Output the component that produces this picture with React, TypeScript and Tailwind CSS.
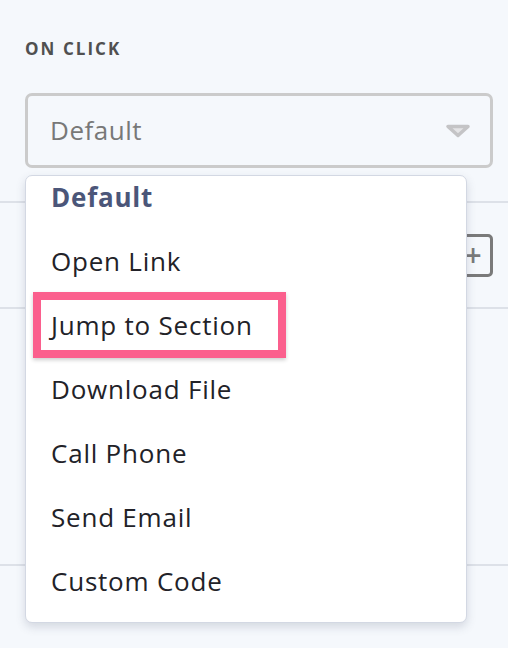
import React from "react";

const OPTIONS = [
  "Default",
  "Open Link",
  "Jump to Section",
  "Download File",
  "Call Phone",
  "Send Email",
  "Custom Code",
];

const FONT = { fontFamily: '"Open Sans", "Noto Sans", Arial, sans-serif' };

const Caret = () => (
  <svg width="26" height="14" viewBox="0 0 26 14" className="shrink-0">
    <path
      d="M3 2.5 H23 L13 11.5 Z"
      fill="#e4e4e6"
      stroke="#c4c4c6"
      strokeWidth="3.5"
      strokeLinejoin="round"
    />
  </svg>
);

const App = () => {
  const [value] = React.useState("Default");

  return (
    <div
      className="relative h-[648px] w-[508px] overflow-hidden bg-[#f5f8fc]"
      style={FONT}
    >
      <div className="pl-[25px] pr-[15px] pt-[38px]">
        <div className="text-[17px] font-bold leading-[22px] tracking-[0.12em] text-[#505050]">
          ON CLICK
        </div>
        <div className="mt-[33px] flex h-[75px] items-center justify-between rounded-[7px] border-[3px] border-[#cbcbcb] pl-[22px] pr-[19px]">
          <span className="text-[26px] tracking-[0.02em] text-[#787878]">{value}</span>
          <Caret />
        </div>
      </div>

      <div className="mt-[33px] border-t-2 border-[#dde1e8]">
        <div className="flex h-[104px] items-center justify-end pr-[15px]">
          <div className="flex h-[43px] w-[40px] items-center justify-center rounded-[5px] border-[3px] border-[#7a7a7a]">
            <span className="text-[30px] font-semibold leading-none text-[#7a7a7a]">+</span>
          </div>
        </div>
        <div className="h-[257px] border-t-2 border-[#dde1e8]" />
        <div className="border-t-2 border-[#dde1e8]" />
      </div>

      <div className="absolute left-[25px] top-[175px] h-[448px] w-[442px] overflow-hidden rounded-[7px] border border-[#d3d8e3] bg-white shadow-[0_4px_10px_rgba(60,70,100,0.18)]">
        <ul className="-mt-[11px]">
          {OPTIONS.map((opt) => (
            <li
              key={opt}
              className={`flex h-[64px] items-center pl-[25px] text-[26px] tracking-[0.03em] ${
                opt === value ? "font-bold text-[#4b5679]" : "text-[#222228]"
              }`}
            >
              {opt === "Jump to Section" ? (
                <span className="-ml-[18px] flex h-[66px] w-[253px] items-center border-[8px] border-[#fb5f8d] pl-[10px] shadow-[0_2px_4px_rgba(0,0,0,0.2)]">
                  {opt}
                </span>
              ) : (
                opt
              )}
            </li>
          ))}
        </ul>
      </div>
    </div>
  );
};

export default App;
